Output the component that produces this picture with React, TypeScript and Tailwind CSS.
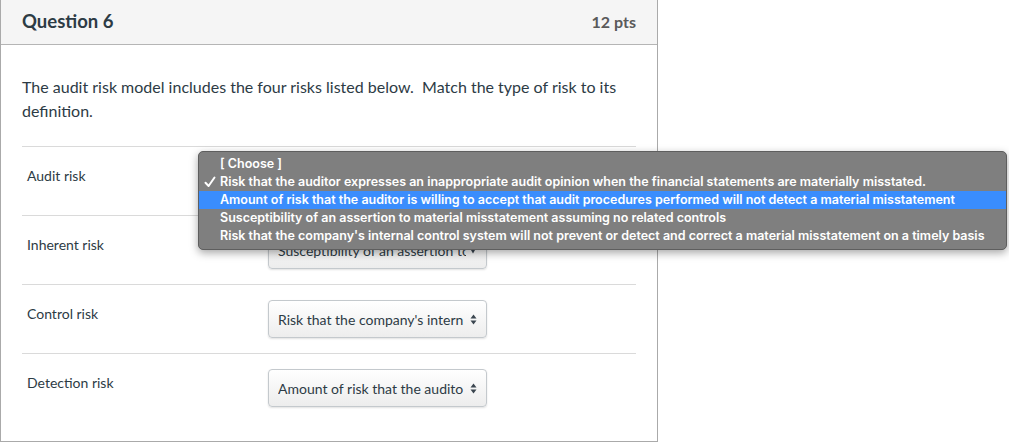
import React from "react";

const lato = { fontFamily: "Lato, 'Open Sans', sans-serif" };

function UpDown() {
  return (
    <svg width="7" height="11" viewBox="0 0 7 11" className="shrink-0">
      <path d="M3.5 0.5 L6.5 4.5 L0.5 4.5 Z" fill="#3b4650" />
      <path d="M3.5 10.5 L6.5 6.5 L0.5 6.5 Z" fill="#3b4650" />
    </svg>
  );
}

function Down() {
  return (
    <svg width="8" height="7" viewBox="0 0 8 7" className="shrink-0">
      <path d="M0.5 0.5 L7.5 0.5 L4 6.5 Z" fill="#3b4650" />
    </svg>
  );
}

function Check() {
  return (
    <svg width="12" height="12" viewBox="0 0 12 12">
      <path d="M1.5 6.8 L4.6 10 L10.5 1.5" fill="none" stroke="#ffffff" strokeWidth="2" strokeLinecap="round" strokeLinejoin="round" />
    </svg>
  );
}

function Select({ text, single }: { text: string; single?: boolean }) {
  return (
    <div className="w-[219px] h-[38px] rounded-[4px] border border-[#c4c9cd] bg-gradient-to-b from-[#ffffff] to-[#ededed] shadow-[0_1px_2px_rgba(0,0,0,0.12)] flex items-center pl-[9px] pr-[9px] justify-between">
      <span className="w-[188px] text-[14px] text-[#2d3b45] whitespace-nowrap overflow-hidden">{text}</span>
      {single ? <Down /> : <UpDown />}
    </div>
  );
}

function Row({ label, children }: { label: string; children?: React.ReactNode }) {
  return (
    <div className="border-t border-[#dadada] h-[69px] flex">
      <div className="w-[246px] pl-[5px] pt-[19px] text-[14px] text-[#2d3b45] leading-[20px]">{label}</div>
      <div className="pt-[15px]">{children}</div>
    </div>
  );
}

export default function App() {
  const items = [
    "[ Choose ]",
    "Risk that the auditor expresses an inappropriate audit opinion when the financial statements are materially misstated.",
    "Amount of risk that the auditor is willing to accept that audit procedures performed will not detect a material misstatement",
    "Susceptibility of an assertion to material misstatement assuming no related controls",
    "Risk that the company's internal control system will not prevent or detect and correct a material misstatement on a timely basis",
  ];
  return (
    <div className="relative w-[1009px] h-[446px] bg-white overflow-hidden" style={lato}>
      <div className="w-[658px] h-[442px] border-l border-r border-b border-[#aaaaaa] flex flex-col">
        <div className="h-[45px] bg-[#f5f5f5] border-b border-[#b5b5b5] flex items-center justify-between pl-[21px] pr-[21px]">
          <span className="text-[18.5px] font-bold text-[#2d3b45]">Question 6</span>
          <span className="text-[16px] font-bold text-[#5a5a5a]">12 pts</span>
        </div>
        <div className="pl-[21px] pr-[21px] pt-[30px]">
          <p className="text-[16px] leading-[24px] text-[#2d3b45] pr-[10px]">
            The audit risk model includes the four risks listed below.&nbsp; Match the type of risk to its definition.
          </p>
          <div className="mt-[23px]">
            <Row label="Audit risk">
              <Select text="" />
            </Row>
            <Row label="Inherent risk">
              <Select text="Susceptibility of an assertion to material misstatement" single />
            </Row>
            <Row label="Control risk">
              <Select text="Risk that the company's intern" />
            </Row>
            <Row label="Detection risk">
              <Select text="Amount of risk that the audito" />
            </Row>
          </div>
        </div>
      </div>

      <div
        className="absolute left-[198px] top-[151px] w-[809px] h-[99px] rounded-[5px] bg-[#7f7f7f] border border-[#5e5e5e] shadow-[0_3px_8px_rgba(0,0,0,0.35)] pt-[3px]"
        style={{ fontFamily: "Inter, 'Liberation Sans', sans-serif" }}
      >
        {items.map((t, i) => (
          <div
            key={i}
            className={`h-[18px] flex items-center text-[12.5px] font-semibold text-white whitespace-nowrap ${i === 2 ? "bg-[#3a8dfd]" : ""}`}
          >
            <span className="w-[21px] pl-[5px] flex items-center">{i === 1 ? <Check /> : null}</span>
            <span>{t}</span>
          </div>
        ))}
      </div>
    </div>
  );
}
